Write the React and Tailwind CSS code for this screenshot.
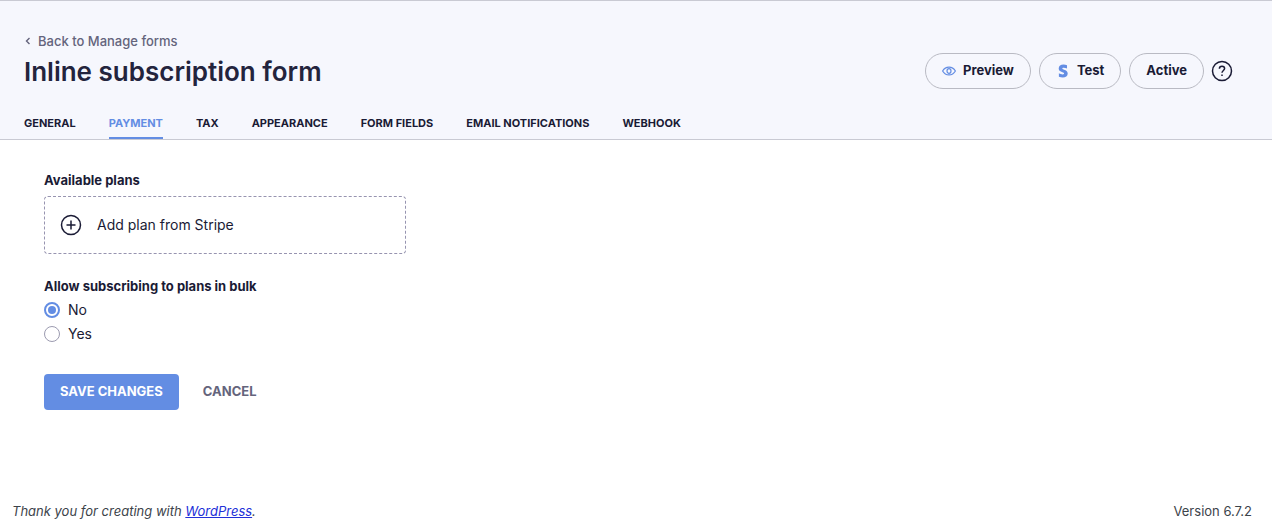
import React, { useState } from "react";

const TABS = ["General", "Payment", "Tax", "Appearance", "Form fields", "Email notifications", "Webhook"];

const ChevronIcon = () => (
    <svg className="w-2 h-2" viewBox="0 0 8 8" fill="none" stroke="currentColor" strokeWidth="1.4" aria-hidden="true">
        <path d="M5.500 1 2.500 4l3 3" />
    </svg>
);

const EyeIcon = () => (
    <svg className="w-4 h-4 text-[#638de3]" viewBox="0 0 16 16" fill="none" stroke="currentColor" strokeWidth="1.2" aria-hidden="true">
        <path d="M1.600 8C3 5.600 5.300 4.100 8 4.100S13 5.600 14.400 8C13 10.400 10.700 11.900 8 11.900S3 10.400 1.600 8Z" />
        <ellipse cx="8" cy="8" rx="2" ry="2.400" />
    </svg>
);

const StripeIcon = () => (
    <svg className="w-4 h-4 text-[#638de3]" viewBox="0 0 16 16" fill="currentColor" aria-hidden="true">
        <path d="M7.300 5.400c0-.550.450-.760 1.200-.760 1.080 0 2.440.330 3.520.910V2.200A9.400 9.400 0 0 0 8.500 1.550C5.620 1.550 3.700 3.050 3.700 5.560c0 3.920 5.390 3.290 5.390 4.980 0 .650-.560.860-1.350.860-1.170 0-2.670-.480-3.850-1.130v3.390c1.310.560 2.630.800 3.850.800 2.950 0 4.980-1.460 4.980-4.010C12.720 6.220 7.300 6.970 7.300 5.400Z" />
    </svg>
);

const HelpIcon = () => (
    <svg className="w-5 h-5 overflow-visible" viewBox="2 2 20 20" fill="none" stroke="currentColor" strokeWidth="1.5" aria-hidden="true">
        <circle cx="12" cy="12" r="9.500" />
        <path d="M9.400 9.700c0-1.500 1.100-2.500 2.600-2.500s2.600 1 2.600 2.400c0 1.900-2.600 2-2.600 4.200" />
        <path d="M12 15.600v1.500" />
    </svg>
);

const PlusIcon = () => (
    <svg className="w-6 h-6" viewBox="0 0 24 24" fill="none" stroke="currentColor" strokeWidth="1.5" aria-hidden="true">
        <circle cx="12" cy="12" r="9.500" />
        <path d="M12 7.500v9M7.500 12h9" />
    </svg>
);

const PillButton = ({ icon, children }) => (
    <button
        type="button"
        className={`flex items-center gap-1.5 h-9 pr-4 border border-[#b9bac3] rounded-full text-[13px] font-bold ${
            icon ? "pl-[15px]" : "pl-4"
        }`}>
        {icon}
        {children}
    </button>
);

const RadioOption = ({ id, label, checked, onChange }) => (
    <div className="flex items-center gap-2 h-6">
        <input
            id={id}
            type="radio"
            name="bulk"
            checked={checked}
            onChange={onChange}
            className="appearance-none w-4 h-4 rounded-full border border-[#9c9bb0] bg-white checked:border-2 checked:border-[#638de3] checked:bg-[#638de3] checked:bg-clip-content checked:p-0.5"
        />
        <label htmlFor={id} className="text-sm">{label}</label>
    </div>
);

export default function App() {
    const [activeTab, setActiveTab] = useState("Payment");
    const [bulk, setBulk] = useState("no");

    return (
        <div className="flex flex-col min-h-screen bg-white text-[#1a1b35] font-['Inter',sans-serif]">
            <header className="border-y border-[#c9cad3] bg-[#f6f7fd] px-6 pt-[30px]">
                <div className="flex justify-between pr-4">
                    <div>
                        <a href="#forms" className="flex items-center gap-1.5 text-[13px] leading-5 font-medium text-[#64647c]">
                            <ChevronIcon />
                            Back to Manage forms
                        </a>
                        <h1 className="text-[26px] leading-[42px] font-semibold text-[#23243d]">Inline subscription form</h1>
                    </div>
                    <div className="flex items-center gap-2 h-9 mt-[22px]">
                        <PillButton icon={<EyeIcon />}>Preview</PillButton>
                        <PillButton icon={<StripeIcon />}>Test</PillButton>
                        <PillButton>Active</PillButton>
                        <button type="button" aria-label="Help"><HelpIcon /></button>
                    </div>
                </div>
                <nav className="flex gap-[33px] mt-[22px]">
                    {TABS.map((tab) => (
                        <button
                            key={tab}
                            type="button"
                            onClick={() => setActiveTab(tab)}
                            className={`pb-1.5 border-b-2 text-[11px] leading-4 font-bold uppercase ${
                                tab === activeTab ? "border-[#638de3] text-[#638de3]" : "border-transparent"
                            }`}>
                            {tab}
                        </button>
                    ))}
                </nav>
            </header>

            <main className="grow px-11 pt-[30px]">
                <h2 className="text-[13px] leading-5 font-bold">Available plans</h2>
                <button
                    type="button"
                    className="flex items-center gap-3.5 w-full max-w-[362px] h-[58px] mt-1.5 px-3.5 border border-dashed border-[#9794b0] rounded text-sm">
                    <PlusIcon />
                    Add plan from Stripe
                </button>

                <fieldset className="mt-[22px]">
                    <legend className="text-[13px] leading-5 font-bold mb-0.5">Allow subscribing to plans in bulk</legend>
                    <RadioOption id="bulk-no" label="No" checked={bulk === "no"} onChange={() => setBulk("no")} />
                    <RadioOption id="bulk-yes" label="Yes" checked={bulk === "yes"} onChange={() => setBulk("yes")} />
                </fieldset>

                <div className="flex items-center gap-2 mt-7">
                    <button type="submit" className="h-9 px-4 rounded bg-[#638de3] text-[13px] font-bold uppercase text-white">
                        Save changes
                    </button>
                    <button type="button" className="h-9 px-4 text-[13px] font-bold uppercase text-[#64647c]">Cancel</button>
                </div>
            </main>

            <footer className="flex justify-between pl-3 pr-5 pb-2.5 text-[13px] leading-5 text-[#3c434a]">
                <p className="italic">
                    Thank you for creating with{" "}
                    <a href="#wordpress" className="text-[#2230d8] underline">WordPress</a>.
                </p>
                <p>Version 6.7.2</p>
            </footer>
        </div>
    );
}
